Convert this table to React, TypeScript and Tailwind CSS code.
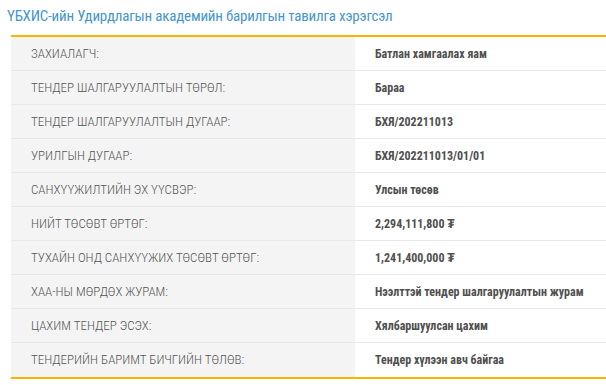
import React from "react";

const rows: { label: string; value: string }[] = [
	{ label: "ЗАХИАЛАГЧ:", value: "Батлан хамгаалах яам" },
	{ label: "ТЕНДЕР ШАЛГАРУУЛАЛТЫН ТӨРӨЛ:", value: "Бараа" },
	{ label: "ТЕНДЕР ШАЛГАРУУЛАЛТЫН ДУГААР:", value: "БХЯ/202211013" },
	{ label: "УРИЛГЫН ДУГААР:", value: "БХЯ/202211013/01/01" },
	{ label: "САНХҮҮЖИЛТИЙН ЭХ ҮҮСВЭР:", value: "Улсын төсөв" },
	{ label: "НИЙТ ТӨСӨВТ ӨРТӨГ:", value: "2,294,111,800 ₮" },
	{ label: "ТУХАЙН ОНД САНХҮҮЖИХ ТӨСӨВТ ӨРТӨГ:", value: "1,241,400,000 ₮" },
	{ label: "ХАА-НЫ МӨРДӨХ ЖУРАМ:", value: "Нээлттэй тендер шалгаруулалтын журам" },
	{ label: "ЦАХИМ ТЕНДЕР ЭСЭХ:", value: "Хялбаршуулсан цахим" },
	{ label: "ТЕНДЕРИЙН БАРИМТ БИЧГИЙН ТӨЛӨВ:", value: "Тендер хүлээн авч байгаа" },
];

const App = () => {
	return (
		<div className="w-[606px] h-[385px] bg-white font-['Roboto_Condensed','Open_Sans_Condensed','Fira_Sans_Condensed',Roboto,sans-serif] font-stretch-condensed">
			<h1 className="pl-[7px] pt-[6px] h-[35px] text-[15px] leading-[20px] tracking-[-0.2px] text-[#4596cc]">
				ҮБХИС-ийн Удирдлагын академийн барилгын тавилга хэрэгсэл
			</h1>
			<div className="ml-[11px] border-t-2 border-b-2 border-[#f7b500]">
				{rows.map((row, index) => (
					<div
						key={index}
						className={`flex h-[34px] ${index < rows.length - 1 ? "border-b border-[#e8e8e8]" : ""}`}
					>
						<div className="w-[344px] shrink-0 bg-[#f4f4f4] pl-5 flex items-center text-[13px] text-[#555] font-light">
							{row.label}
						</div>
						<div className="flex-1 pl-5 flex items-center text-[12px] text-[#505050] font-bold whitespace-nowrap">
							{row.value}
						</div>
					</div>
				))}
			</div>
		</div>
	);
};

export default App;
